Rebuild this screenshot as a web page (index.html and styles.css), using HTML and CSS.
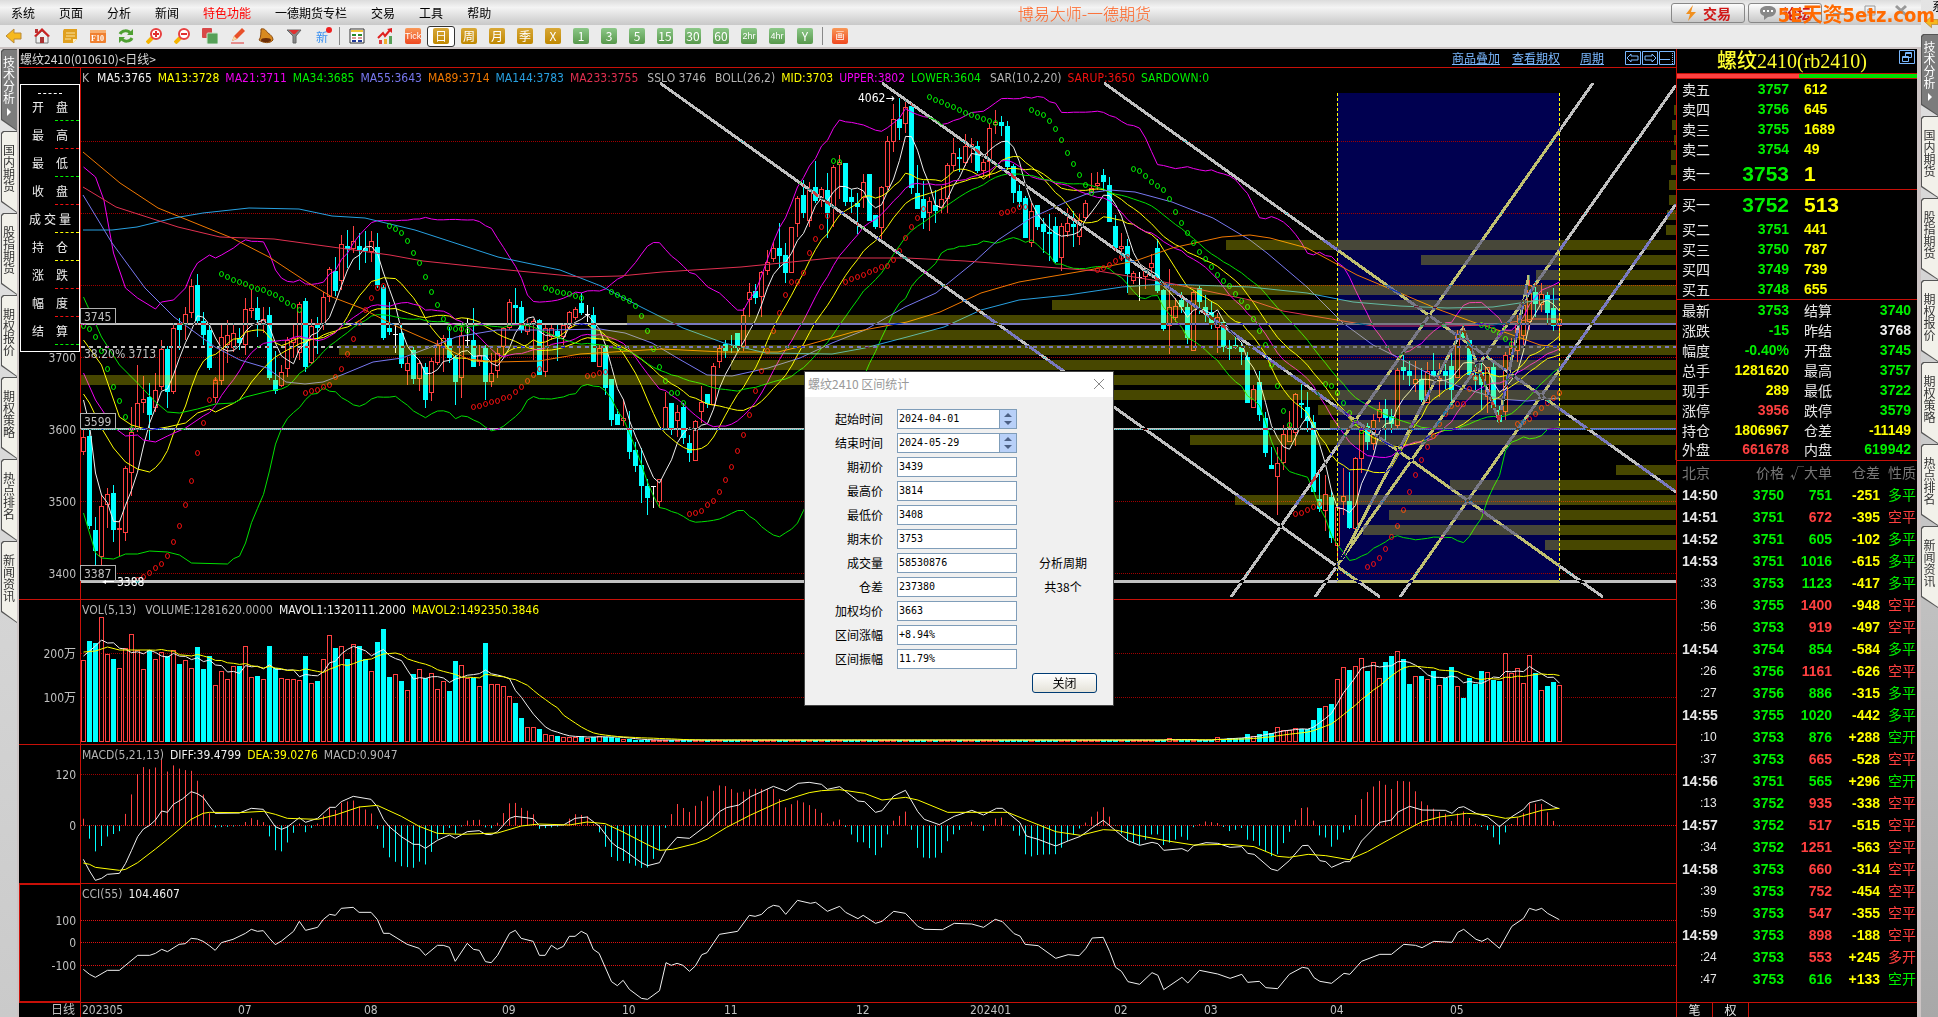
FILE: index.html
```html
<!DOCTYPE html>
<html lang="zh-CN">
<head>
    <meta charset="UTF-8">
    <meta name="viewport" content="width=device-width, initial-scale=1.0">
    <title>博易大师-一德期货</title>
    <link rel="stylesheet" href="styles.css">
</head>
<body>

<div class="app">
    <header>
        <nav class="menu">
            <a href="#">系统</a>
            <a href="#">页面</a>
            <a href="#">分析</a>
            <a href="#">新闻</a>
            <a href="#" class="hot">特色功能</a>
            <a href="#">一德期货专栏</a>
            <a href="#">交易</a>
            <a href="#">工具</a>
            <a href="#">帮助</a>
            <h1>博易大师-一德期货</h1>
            <div class="menu-right">
                <button class="big"><svg width="12" height="16" viewBox="0 0 12 16"><path d="M8 0L1 9h4L3 16l8-9H6z" fill="#f09020"/></svg>交易</button>
                <button class="big"><svg width="18" height="16" viewBox="0 0 18 16"><path d="M9 1c5 0 8 2 8 5s-3 6-8 6l-4 3v-4C2 10 1 8 1 6c0-3 3-5 8-5z" fill="#888"/><path d="M4 6h2M8 6h2M12 6h2" stroke="#fff" stroke-width="2"/></svg>论坛</button>
                <button class="win" aria-label="最小化"><svg width="14" height="14" viewBox="0 0 14 14"><path d="M1 10h12" stroke="#999" stroke-width="2"/></svg></button>
                <button class="win" aria-label="还原"><svg width="14" height="14" viewBox="0 0 14 14"><path d="M2 2h10v9H2zM5 5h4v3H5z" fill="none" stroke="#999"/></svg></button>
                <button class="win" aria-label="关闭"><svg width="14" height="14" viewBox="0 0 14 14"><path d="M2 2l10 9M12 2L2 11" stroke="#999" stroke-width="3"/></svg></button>
            </div>
        </nav>
        <div class="toolbar">
            <button aria-label="后退"><svg viewBox="0 0 16 16"><path d="M0 8l8-7v4h7v6H8v4z" fill="#f6b91e" stroke="#b98a3a"/></svg></button>
            <button aria-label="首页"><svg viewBox="0 0 16 16"><path d="M2 8v7h12V8L8 3z" fill="#eee" stroke="#777"/><path d="M0 8l8-8 8 8-2 1-6-6-6 6z" fill="#c22"/><path d="M1 1h3v4H1z" fill="#b33"/><path d="M6 9h4v6H6z" fill="#a33"/></svg></button>
            <button aria-label="便笺"><svg viewBox="0 0 16 16"><path d="M2 1h13v10l-4 4H1V3z" fill="#e0a020"/><path d="M4 5h9M4 8h9M3 11h6" stroke="#fbe3a0"/><path d="M15 11h-4v4z" fill="#fff0c0"/></svg></button>
            <button aria-label="F10"><svg viewBox="0 0 16 16"><rect y="2" width="16" height="13" rx="1" fill="#f08030"/><path d="M0 2h16v3H0z" fill="#f8b070"/><text x="1" y="13" class="f10">F10</text></svg></button>
            <button aria-label="刷新"><svg viewBox="0 0 16 16"><path d="M2 6c2-4 8-4 10-1M14 10c-2 4-8 4-10 1" fill="none" stroke="#4fa032" stroke-width="3"/><path d="M15 1v6H9zM1 15V9h6z" fill="#4fa032"/></svg></button>
            <button aria-label="放大"><svg viewBox="0 0 16 16"><path d="M1 15l6-6" stroke="#f5b400" stroke-width="4"/><circle cx="10" cy="6" r="5" fill="#fff" stroke="#e84040" stroke-width="2"/><path d="M7 6h6M10 3v6" stroke="#e03030" stroke-width="2"/></svg></button>
            <button aria-label="缩小"><svg viewBox="0 0 16 16"><path d="M1 15l6-6" stroke="#f5b400" stroke-width="4"/><circle cx="10" cy="6" r="5" fill="#fff" stroke="#e84040" stroke-width="2"/><path d="M7 6h6" stroke="#e03030" stroke-width="2"/></svg></button>
            <button aria-label="叠加"><svg viewBox="0 0 16 16"><rect width="10" height="10" rx="1" fill="#d84848"/><rect x="5" y="5" width="11" height="11" rx="1" fill="#56a058" stroke="#cfe5cf"/></svg></button>
            <button aria-label="画线"><svg viewBox="0 0 16 16"><path d="M2 13l2-5 8-8 3 3-8 8z" fill="#e8502a"/><path d="M2 13l2-5 3 3z" fill="#f6d9a0"/><path d="M1 15h13" stroke="#e03030"/></svg></button>
            <button aria-label="预警"><svg viewBox="0 0 16 16"><path d="M3 1c4-1 5 2 7 4 3 2 5 4 5 7-3 4-10 3-14 0 2-2 2-8 2-11z" fill="#d98a20" stroke="#8a4a10"/><ellipse cx="8" cy="12" rx="5" ry="2" fill="#6b2d08"/></svg></button>
            <button aria-label="筛选"><svg viewBox="0 0 16 16"><path d="M1 2h14l-5 6v7H7V8z" fill="#888" stroke="#666"/><path d="M3 2h10L9 6H7z" fill="#e03030"/></svg></button>
            <button class="new" aria-label="新">新<i></i></button>
            <span class="sep"></span>
            <button aria-label="报价"><svg viewBox="0 0 16 16"><path d="M1 1h14v14H1z" fill="#fff" stroke="#333"/><path d="M2 2h12v2H2z" fill="#f2c53c"/><path d="M3 7h4M9 7h4" stroke="#2a8a2a" stroke-width="2"/><path d="M3 10h4M9 10h4" stroke="#c03030"/><path d="M3 13h4M9 13h4" stroke="#223a9a" stroke-width="2"/></svg></button>
            <button aria-label="走势"><svg viewBox="0 0 16 16"><path d="M2 16v-4h3v4z" fill="#e04040"/><path d="M7 16v-5h3v5z" fill="#f0b030"/><path d="M12 16V8h3v8z" fill="#58a058"/><path d="M1 10l5-5 2 3 5-6" fill="none" stroke="#e02020" stroke-width="2"/><path d="M15 0v5l-5-4z" fill="#e02020"/></svg></button>
            <button><b class="tile tick">Tick</b></button>
            <button class="on"><b class="tile gold">日</b></button>
            <button><b class="tile gold">周</b></button>
            <button><b class="tile gold">月</b></button>
            <button><b class="tile gold">季</b></button>
            <button><b class="tile gold">X</b></button>
            <button><b class="tile green">1</b></button>
            <button><b class="tile green">3</b></button>
            <button><b class="tile green">5</b></button>
            <button><b class="tile green">15</b></button>
            <button><b class="tile green">30</b></button>
            <button><b class="tile green">60</b></button>
            <button><b class="tile green narrow">2hr</b></button>
            <button><b class="tile green narrow">4hr</b></button>
            <button><b class="tile green">Y</b></button>
            <span class="sep"></span>
            <button><b class="tile tick">画</b></button>
        </div>
        <div class="watermark">5E天资5etz.com</div>
    </header>

    <main>
        <aside class="tabs">
            <a href="#" class="tab active"><span>技术分析</span><i></i></a>
            <a href="#" class="tab"><span>国内期货</span></a>
            <a href="#" class="tab"><span>股指期货</span></a>
            <a href="#" class="tab"><span>期权报价</span></a>
            <a href="#" class="tab"><span>期权策略</span></a>
            <a href="#" class="tab"><span>热点排名</span></a>
            <a href="#" class="tab"><span>新闻资讯</span></a>
        </aside>

        <section class="chart">
            <div class="chart-title">
                <span>螺纹2410(010610)&lt;日线&gt;</span>
                <div class="links">
                    <a href="#">商品叠加</a>
                    <a href="#">查看期权</a>
                    <a href="#" class="last">周期</a>
                    <svg width="50" height="15" viewBox="0 0 50 15" fill="none" stroke="#7ab8ff"><path d="M.5 .5h15v13H.5zM17.5 .5h15v13h-15zM34.5 .5h15v13h-15z"/><path d="M2 7l4-4v2h7v4H6v2zM31 7l-4-4v2h-7v4h7v2zM35 8.5h10"/><path d="M47.5 2v11" stroke-dasharray="1 1"/></svg>
                </div>
            </div>
            <div class="pane">
                <svg id="price" viewBox="19 68 1657 531" preserveAspectRatio="none"></svg>
                <p class="legend first">
                    <span class="g k">K</span><span class="w">MA5:3765</span><span class="y">MA13:3728</span><span class="m">MA21:3711</span><span class="gr">MA34:3685</span><span class="pu">MA55:3643</span><span class="or">MA89:3714</span><span class="bl">MA144:3783</span><span class="cr">MA233:3755</span><span class="g">SSLO 3746</span><span class="g">BOLL(26,2)</span><span class="y">MID:3703</span><span class="m">UPPER:3802</span><span class="gr">LOWER:3604</span><span class="g">SAR(10,2,20)</span><span class="re">SARUP:3650</span><span class="gr">SARDOWN:0</span>
                </p>
                <div class="cursor-box">
                    <div class="dash w"></div>
                    <div class="item gr"><b>开</b><b>盘</b></div>
                    <div class="item re"><b>最</b><b>高</b></div>
                    <div class="item gr"><b>最</b><b>低</b></div>
                    <div class="item re"><b>收</b><b>盘</b></div>
                    <div class="item y wide"><b>成</b><b>交</b><b>量</b></div>
                    <div class="item y"><b>持</b><b>仓</b></div>
                    <div class="item re"><b>涨</b><b>跌</b></div>
                    <div class="item re"><b>幅</b><b>度</b></div>
                    <div class="item gr"><b>结</b><b>算</b></div>
                </div>
            </div>
            <div class="pane">
                <svg id="vol" viewBox="19 600 1657 144" preserveAspectRatio="none"></svg>
                <p class="legend"><span class="g">VOL(5,13)</span><span class="g">VOLUME:1281620.0000</span><span class="w">MAVOL1:1320111.2000</span><span class="y">MAVOL2:1492350.3846</span></p>
            </div>
            <div class="pane">
                <svg id="macd" viewBox="19 745 1657 138" preserveAspectRatio="none"></svg>
                <p class="legend"><span class="g">MACD(5,21,13)</span><span class="w">DIFF:39.4799</span><span class="y">DEA:39.0276</span><span class="g">MACD:0.9047</span></p>
            </div>
            <div class="pane cci">
                <svg id="cci" viewBox="19 884 1657 118" preserveAspectRatio="none"></svg>
                <p class="legend"><span class="g">CCI(55)</span><span class="w">104.4607</span></p>
            </div>
            <div class="dates"><svg id="dates" viewBox="19 1003 1657 14" preserveAspectRatio="none"></svg></div>
        </section>

        <section class="quote">
            <h2>螺纹2410(rb2410)<svg width="16" height="14" viewBox="0 0 16 14" fill="none" stroke="#7ab8ff"><path d="M.5 .5h15v13H.5zM6.5 2.5h6v5h-6zM6.5 3.5h6M3.5 6.5h6v5h-6zM3.5 7.5h6"/></svg></h2>
            <div class="ratio"><i></i></div>
            <table class="book">
                <tr><th>卖五</th><td class="gr">3757</td><td>612</td></tr>
                <tr><th>卖四</th><td class="gr">3756</td><td>645</td></tr>
                <tr><th>卖三</th><td class="gr">3755</td><td>1689</td></tr>
                <tr><th>卖二</th><td class="gr">3754</td><td>49</td></tr>
                <tr class="top"><th>卖一</th><td class="gr">3753</td><td>1</td></tr>
            </table>
            <table class="book">
                <tr class="top"><th>买一</th><td class="gr">3752</td><td>513</td></tr>
                <tr><th>买二</th><td class="gr">3751</td><td>441</td></tr>
                <tr><th>买三</th><td class="gr">3750</td><td>787</td></tr>
                <tr><th>买四</th><td class="gr">3749</td><td>739</td></tr>
                <tr><th>买五</th><td class="gr">3748</td><td>655</td></tr>
            </table>
            <table class="stats">
                <tr><th>最新</th><td class="gr">3753</td><th>结算</th><td class="gr">3740</td></tr>
                <tr><th>涨跌</th><td class="gr">-15</td><th>昨结</th><td class="w">3768</td></tr>
                <tr><th>幅度</th><td class="gr">-0.40%</td><th>开盘</th><td class="gr">3745</td></tr>
                <tr><th>总手</th><td class="y">1281620</td><th>最高</th><td class="gr">3757</td></tr>
                <tr><th>现手</th><td class="y">289</td><th>最低</th><td class="gr">3722</td></tr>
                <tr><th>涨停</th><td class="rd">3956</td><th>跌停</th><td class="gr">3579</td></tr>
                <tr><th>持仓</th><td class="y">1806967</td><th>仓差</th><td class="y">-11149</td></tr>
                <tr><th>外盘</th><td class="rd">661678</td><th>内盘</th><td class="gr">619942</td></tr>
            </table>
            <table class="ticks">
                <thead><tr><th>北京</th><th>价格</th><th>√大单</th><th>仓差</th><th>性质</th></tr></thead>
                <tbody id="ticks"></tbody>
            </table>
            <div class="quote-tabs"><a href="#">笔</a><a href="#">权</a></div>
        </section>
    </main>
</div>

<aside class="side">
    <div class="side-top"><span>系</span><svg width="13" height="14" viewBox="0 0 16 16"><path d="M0 8l8-7v4h8v6H8v4z" fill="#f6b91e" stroke="#b98a3a"/></svg></div>
    <a href="#" class="tab active"><span>技术分析</span><i></i></a>
    <a href="#" class="tab"><span>国内期货</span></a>
    <a href="#" class="tab"><span>股指期货</span></a>
    <a href="#" class="tab"><span>期权报价</span></a>
    <a href="#" class="tab"><span>期权策略</span></a>
    <a href="#" class="tab"><span>热点排名</span></a>
    <a href="#" class="tab"><span>新闻资讯</span></a>
</aside>

<form class="dialog">
    <div class="dialog-title"><span>螺纹2410 区间统计</span><button type="button" aria-label="关闭"><svg width="12" height="12" viewBox="0 0 12 12"><path d="M1 1l10 10M11 1L1 11" stroke="#888"/></svg></button></div>
    <div class="fields">
        <label for="f1">起始时间</label><div class="spin"><input id="f1" value="2024-04-01"><svg viewBox="0 0 16 18"><path d="M4 7l4-4 4 4zM4 11l4 4 4-4z" fill="#4d6185"/></svg></div><span></span>
        <label for="f2">结束时间</label><div class="spin"><input id="f2" value="2024-05-29"><svg viewBox="0 0 16 18"><path d="M4 7l4-4 4 4zM4 11l4 4 4-4z" fill="#4d6185"/></svg></div><span></span>
        <label for="f3">期初价</label><input id="f3" value="3439"><span></span>
        <label for="f4">最高价</label><input id="f4" value="3814"><span></span>
        <label for="f5">最低价</label><input id="f5" value="3408"><span></span>
        <label for="f6">期末价</label><input id="f6" value="3753"><span></span>
        <label for="f7">成交量</label><input id="f7" value="58530876"><span>分析周期</span>
        <label for="f8">仓差</label><input id="f8" value="237380"><span>共38个</span>
        <label for="f9">加权均价</label><input id="f9" value="3663"><span></span>
        <label for="f10">区间涨幅</label><input id="f10" value="+8.94%"><span></span>
        <label for="f11">区间振幅</label><input id="f11" value="11.79%"><span></span>
    </div>
    <button type="button" class="close">关闭</button>
</form>

<script src="chart.js"></script>
</body>
</html>
```
FILE: styles.css
```css
* {
    box-sizing: border-box;
}
body {
    margin: 0;
    height: 100vh;
    display: flex;
    overflow: hidden;
    background: #d0d0d0;
    color: #000;
    font: 12px "Noto Sans CJK SC", sans-serif;
}
a {
    color: inherit;
    text-decoration: none;
}
button {
    font: inherit;
    padding: 0;
    border: 0;
    background: none;
    color: inherit;
}
.app {
    flex: 1;
    min-width: 0;
    display: flex;
    flex-direction: column;
}

/* colours shared by the legends and the quote panel */
.g { color: #b4b4b4; }
.w { color: #f0f0f0; }
.y { color: #ffff00; }
.m { color: #f000f0; }
.gr { color: #00f000; }
.pu { color: #7878f0; }
.or { color: #f07800; }
.bl { color: #28a0e0; }
.cr { color: #e03050; }
.re { color: #f01010; }
.rd { color: #ff4040; }

/* menu and toolbar */
header {
    position: relative;
}
.menu {
    display: flex;
    align-items: center;
    gap: 24px;
    height: 25px;
    padding-left: 11px;
    background: linear-gradient(#dcdcdc, #f4f4f4 30%, #c8c8c8);
}
.menu .hot {
    color: #ff0000;
}
.menu h1 {
    margin: 0 0 0 auto;
    font-size: 16px;
    font-weight: 300;
    color: #ff6020;
    white-space: nowrap;
}
.menu-right {
    flex: 0 0 250px;
    margin-left: 496px;
    display: flex;
    gap: 3px;
}
.menu-right .big {
    display: flex;
    align-items: center;
    justify-content: center;
    gap: 6px;
    width: 74px;
    height: 20px;
    border: 1px solid #888;
    border-radius: 3px;
    background: linear-gradient(#fdfdfd, #c8c8c8);
    color: #d01818;
    font-size: 14px;
    font-weight: 700;
    line-height: 18px;
}
.menu-right .win {
    width: 28px;
}
.watermark {
    position: absolute;
    right: -14px;
    top: 1px;
    z-index: 2;
    font-family: "DejaVu Sans Condensed", "Noto Sans CJK SC", sans-serif;
    font-size: 20px;
    font-weight: 700;
    line-height: 28px;
    white-space: nowrap;
    color: #ff6a00;
}
.toolbar {
    display: flex;
    align-items: center;
    height: 24px;
    background: #ebebeb;
    border-bottom: 2px solid #ccc4c4;
}
.toolbar button {
    flex: 0 0 28px;
    height: 21px;
    display: flex;
    align-items: center;
    justify-content: center;
}
.toolbar button svg {
    width: 16px;
    height: 16px;
}
.toolbar .on {
    background: #fff;
    border: 1px solid #333;
    border-radius: 3px;
}
.toolbar .new {
    position: relative;
    color: #3a90f0;
}
.new i {
    position: absolute;
    right: 4px;
    top: 1px;
    width: 6px;
    height: 6px;
    border-radius: 50%;
    background: #f02020;
}
.sep {
    width: 1px;
    height: 18px;
    margin: 0 3px;
    background: #888;
}
.tile {
    width: 16px;
    height: 16px;
    border-radius: 2px;
    color: #fff;
    font-size: 12px;
    font-weight: 400;
    line-height: 16px;
    text-align: center;
}
.tile.narrow {
    font: 9px/16px "Liberation Sans", sans-serif;
}
.gold { background: linear-gradient(#d8a838, #c08800); }
.green { background: linear-gradient(#8cc888, #58984c); }
.tick {
    background: linear-gradient(#f89858, #f04820);
    font: 9px/16px "Liberation Sans", "Noto Sans CJK SC", sans-serif;
}

main {
    flex: 1;
    min-height: 0;
    display: flex;
}

/* slanted vertical tabs */
.tabs {
    flex: 0 0 19px;
    padding-left: 1px;
    background: linear-gradient(#e4e4e4, #cacaca);
    border-right: 2px solid #ccc4c4;
}
.side {
    flex: 0 0 17px;
    min-width: 0;
    overflow: hidden;
    background: linear-gradient(#e4e4e4, #a8a8a8);
}
.side-top {
    height: 34px;
    padding-left: 4px;
}
.side-top span {
    display: block;
    height: 15px;
    line-height: 12px;
    padding-left: 7px;
    white-space: nowrap;
}
.side-top svg {
    display: block;
}
.tab {
    position: relative;
    display: flex;
    flex-direction: column;
    align-items: center;
    justify-content: center;
    height: 82px;
    padding-bottom: 8px;
    background: #555;
    clip-path: polygon(0 2px, 2px 0, 100% 0, 100% 100%, 0 calc(100% - 11px));
    color: #333;
}
.tab::before {
    content: "";
    position: absolute;
    inset: 1px 0 1px 1px;
    background: #f2f1ea;
    clip-path: polygon(0 2px, 2px 0, 100% 0, 100% 100%, 0 calc(100% - 11px));
}
.tab span {
    position: relative;
    width: 12px;
    line-height: 12px;
    word-break: break-all;
}
.tab.active {
    color: #fff;
}
.tab.active::before {
    background: #7c7c7c;
}
.tab i {
    position: relative;
    margin-top: 4px;
    border-left: 4px solid #fff;
    border-top: 4px solid transparent;
    border-bottom: 4px solid transparent;
}

/* chart panes */
.chart {
    flex: 1;
    min-width: 0;
    display: grid;
    grid-template-rows: 19px 532fr 145fr 139fr 119fr 14fr;
    background: #000;
    border-right: 1px solid #c81008;
}
.chart-title {
    display: flex;
    justify-content: space-between;
    align-items: center;
    padding: 0 1px;
    border-bottom: 1px solid #c81008;
    color: #d8d8d8;
}
.links {
    display: flex;
    align-items: center;
    gap: 12px;
    line-height: 14px;
    color: #7ab8ff;
}
.links a {
    text-decoration: underline;
}
.links .last {
    margin: 0 9px 0 8px;
}
.pane {
    position: relative;
    min-height: 0;
    border-bottom: 1px solid #c81008;
}
.pane svg,
.dates svg {
    position: absolute;
    inset: 0;
    width: 100%;
    height: 100%;
}
.dates {
    position: relative;
    min-height: 0;
}
.legend {
    position: relative;
    display: flex;
    gap: 6px;
    margin: 0;
    padding: 3px 0 0 63px;
    font: 12px/14px "DejaVu Sans Condensed", sans-serif;
    white-space: nowrap;
}
.legend .k {
    margin-right: 2px;
}
.legend .g + .g,
.legend.first .g:not(.k) {
    margin-left: 3px;
}
.cursor-box {
    position: absolute;
    left: 1px;
    top: 16px;
    width: 60px;
    height: 268px;
    border: 1px solid #fff;
    background: #000;
    color: #f0f0f0;
}
.dash {
    width: 24px;
    margin: 8px auto 0;
    border-top: 1px dashed #fff;
}
.item {
    position: relative;
    display: flex;
    justify-content: center;
    gap: 12px;
    height: 28px;
    line-height: 26px;
}
.item b {
    font-weight: 400;
    color: #f0f0f0;
}
.item.wide {
    gap: 3px;
}
.item::after {
    content: "";
    position: absolute;
    right: 0;
    bottom: 1px;
    width: 24px;
    border-top: 1px dashed;
}

/* chart drawing */
svg text {
    font-family: "DejaVu Sans Condensed", "Noto Sans CJK SC", sans-serif;
    font-size: 12px;
    fill: #c0c0c0;
}
svg text.f10 {
    font: 700 8px "Liberation Serif", serif;
    fill: #fff;
}
svg .right { text-anchor: end; }
svg .bright { fill: #fff; stroke: none; }
svg .grid { stroke: #a00000; stroke-dasharray: 1 1; }
svg .grid.hi { stroke: #e01010; }
svg .frame { stroke: #c81008; }
svg .up { stroke: #ff4040; fill: none; }
svg .up.body { fill: #000; }
svg .down { stroke: #00ffff; fill: #00ffff; }
svg .flat { stroke: #ffffff; }
svg .line { fill: none; stroke-width: 1; }
svg .drawn { stroke: #c0c0c0; fill: none; mix-blend-mode: difference; }
svg .profile { fill: #ffff00; fill-opacity: .28; }
svg .range { fill: #000050; }
svg .edge { stroke: #ffff00; stroke-dasharray: 3 2; }

/* quote panel */
.quote {
    flex: 0 0 244px;
    display: flex;
    flex-direction: column;
    background: #000;
    border-right: 4px solid #ccc4c4;
    color: #e8e8e8;
    font-size: 14px;
}
.quote h2 {
    display: flex;
    justify-content: flex-end;
    gap: 32px;
    margin: 0;
    padding: 1px 2px 0 0;
    height: 24px;
    font: 500 20px/23px "Liberation Serif", "Noto Sans CJK SC", serif;
    color: #ffff30;
}
.ratio {
    height: 6px;
    border: solid #c81008;
    border-width: 1px 0;
    background: #00e000;
}
.ratio i {
    display: block;
    width: 51%;
    height: 4px;
    background: #ff4040;
}
.quote table {
    width: 100%;
    table-layout: fixed;
    border-collapse: collapse;
}
.quote th,
.quote td {
    height: 20px;
    padding: 0;
    line-height: 19px;
}
.quote th {
    font-weight: 400;
    text-align: left;
    white-space: nowrap;
}
.quote td {
    font-family: "Liberation Sans", "Noto Sans CJK SC", sans-serif;
    font-weight: 700;
    text-align: right;
}
.book,
.stats {
    border-bottom: 1px solid #c81008;
}
.quote .book th,
.quote .stats th:first-child {
    width: 50px;
    padding-left: 5px;
}
.book td:nth-child(2),
.stats td:nth-child(2) {
    width: 62px;
}
.quote .book td:last-child {
    padding-left: 15px;
    text-align: left;
    color: #ffff00;
}
.quote .book .top th,
.quote .book .top td {
    height: 30px;
}
.book .top td {
    font-size: 21px;
}
.quote .stats th:nth-child(3) {
    width: 60px;
    padding-left: 15px;
}
.quote .stats td:last-child {
    padding-right: 6px;
}
.quote .ticks th {
    height: 24px;
}
.quote .ticks td {
    height: 22px;
}
.ticks th {
    color: #787878;
}
.quote .ticks th + th {
    text-align: right;
}
.quote .ticks tr > :first-child {
    width: 50px;
    padding-left: 5px;
    text-align: left;
}
.quote .ticks tr > :nth-child(2) { width: 57px; }
.quote .ticks tr > :nth-child(3) { width: 48px; }
.quote .ticks tr > :nth-child(4) { width: 48px; }
.quote .ticks tr > :nth-child(5) {
    padding-right: 1px;
    font-weight: 400;
}
.quote .ticks td.sec {
    padding-left: 23px;
    font-size: 12px;
    font-weight: 400;
}
.quote-tabs {
    margin-top: auto;
    display: flex;
    height: 15px;
    border-top: 1px solid #c81008;
    font-size: 12px;
    line-height: 14px;
}
.quote-tabs a {
    width: 36px;
    border-right: 1px solid #c81008;
    text-align: center;
}

/* range statistics dialog */
.dialog {
    position: absolute;
    left: 805px;
    top: 372px;
    width: 308px;
    padding-bottom: 12px;
    background: #f0f0f0;
    outline: 1px solid #444;
}
.dialog-title {
    display: flex;
    justify-content: space-between;
    align-items: center;
    height: 25px;
    padding: 0 8px 2px 3px;
    background: #fff;
    color: #999;
}
.dialog-title button {
    height: 12px;
    line-height: 0;
}
.fields {
    display: grid;
    grid-template-columns: 78px 120px 64px;
    grid-auto-rows: 20px;
    gap: 4px 14px;
    align-items: center;
    padding-top: 12px;
    line-height: 16px;
}
.fields label {
    text-align: right;
}
.fields span {
    text-align: center;
    white-space: nowrap;
}
.fields input {
    width: 100%;
    height: 20px;
    padding: 0 1px 2px;
    border: 1px solid #7f9db9;
    background: #fff;
    font: 10px "DejaVu Sans Mono", monospace;
}
.spin {
    display: flex;
    height: 20px;
    border: 1px solid #7f9db9;
    background: #b8d0f8;
}
.fields .spin input {
    flex: 1;
    min-width: 0;
    height: 18px;
    border: 0;
    border-right: 1px solid #7f9db9;
}
.spin svg {
    flex: 0 0 16px;
}
.close {
    display: block;
    width: 65px;
    height: 20px;
    margin: 4px 16px 0 auto;
    border: 1px solid #003c74;
    border-radius: 3px;
    background: linear-gradient(#fff, #e4e2d8);
    line-height: 18px;
}
```
FILE: chart.js
```js
const NS = 'http://www.w3.org/2000/svg';

function add(svg, tag, cls, attrs, text) {
    const el = document.createElementNS(NS, tag);
    if (cls) el.setAttribute('class', cls);
    for (const k in attrs) el.setAttribute(k, attrs[k]);
    if (text) el.textContent = text;
    svg.appendChild(el);
    return el;
}

const hline = (svg, cls, y, x1 = 81, x2 = 1676) => add(svg, 'line', cls, { x1, x2, y1: y, y2: y });
const X = i => 83.5 + 6 * i;

// each bar: direction (r up, c down, w flat) then top, bottom, high, low
const bars = `r437,452,430,455 c436,526,430,529 c530,551,517,565 r506,557,495,565 r494,505,488,528 c493,530,485,542 r528,530,520,556 r468,533,466,541 r432,473,407,496 r403,430,365,432
r399,403,376,413 c397,415,383,440 r390,408,373,412 r349,387,340,390 c349,392,346,408 r328,392,323,394 c323,330,318,350 r314,325,307,340 r286,313,279,318 c285,321,274,325
c321,335,312,345 c330,368,325,370 r380,398,377,403 r337,381,325,385 r335,345,320,363 r333,348,323,352 c338,343,328,350 r309,345,298,355 r308,311,289,318 c308,320,297,337
r319,325,307,333 c315,378,307,380 c380,391,351,394 r372,386,365,387 r340,369,337,377 r338,343,325,358 r304,353,302,360 c301,367,298,372 r326,363,319,364 c323,328,317,354
r297,325,292,330 r269,297,267,302 c271,291,257,296 r244,281,235,290 c246,249,230,268 r241,249,226,253 c246,250,233,270 c248,251,231,263 r241,252,231,262 c247,285,233,288
c287,338,285,340 c328,332,302,335 w334,334,325,353 c333,364,323,368 r363,371,357,385 c350,379,347,384 r363,379,360,391 c367,400,363,408 r361,393,358,401 r345,363,340,365
r338,348,335,372 c338,358,327,363 c357,382,355,405 r335,378,323,398 w340,340,318,347 c340,367,308,367 r355,362,345,366 c348,382,345,400 r373,382,353,387 r353,371,347,378
r328,347,327,355 r302,328,299,330 c305,308,288,323 c307,330,301,333 r323,332,319,335 r321,325,319,360 c320,375,319,375 r328,372,325,377 r328,337,325,340 c331,337,325,361
r325,337,323,345 r312,328,311,330 r309,318,307,320 c303,313,293,315 w314,314,305,322 c315,362,307,362 r348,367,345,367 c345,388,345,395 c379,420,379,426 c414,425,409,425
r418,421,399,426 c429,452,411,459 c450,466,442,472 c465,486,448,503 c486,498,479,515 w486,486,486,508 r479,502,479,508 r407,429,392,429 c403,429,403,435 r412,421,405,437
c407,438,403,444 c443,453,435,462 r421,461,420,461 r402,412,386,423 c394,404,394,408 r366,405,363,405 r348,362,345,368 c344,351,340,358 c346,348,335,353 c333,348,333,352
r315,347,308,351 r292,300,283,317 c291,298,284,304 r272,297,271,317 r262,271,250,275 r248,259,242,262 c248,256,223,268 c255,273,243,283 r227,273,227,273 r198,224,196,237
c195,213,180,218 r189,221,182,227 c187,201,161,203 r189,200,187,207 c190,213,173,238 r167,207,165,227 r162,165,155,199 c163,202,163,206 c197,202,189,213 c203,207,193,234
r182,198,174,208 c174,221,174,221 c215,227,215,229 r187,228,186,240 r141,187,136,190 r119,142,104,152 c119,128,98,140 r107,124,100,133 c106,188,103,194 c193,209,165,209
c199,218,181,229 r201,213,197,231 c205,211,190,223 r199,208,186,213 r165,199,163,213 r153,166,138,171 c157,159,148,172 r146,163,134,166 r144,148,138,163 c146,171,141,173
r162,171,159,177 r128,162,123,178 r122,125,110,134 c122,126,116,136 c126,167,121,170 c166,193,164,203 c191,202,185,207 c198,238,196,238 r211,243,203,247 c205,227,205,230
c224,232,218,253 c232,234,214,261 c226,262,217,263 r226,258,223,271 r223,232,208,237 c224,227,211,247 r220,237,214,245 r203,218,200,221 r188,192,173,193 r183,186,172,190
c175,182,169,191 c185,222,177,222 c226,248,215,251 r246,249,233,261 c246,274,239,293 r273,281,271,284 w277,277,272,301 r270,277,268,289 r263,268,254,277 c248,291,239,293
c290,329,289,331 r307,326,269,354 r306,318,298,322 c300,307,292,313 c307,338,303,344 r292,351,290,351 c288,302,286,314 c307,313,295,322 c312,325,301,329 r317,328,313,353
c322,347,320,352 c346,349,340,360 c345,347,335,349 c347,352,342,365 c357,403,352,403 r389,408,385,408 c382,415,371,421 c418,453,412,457 c465,469,447,469 r463,477,447,515
r434,463,425,470 r427,442,411,442 r394,433,393,446 c403,405,383,418 c407,421,392,432 c422,492,415,492 c499,509,470,512 r494,511,475,531 c497,538,490,543 r507,546,507,560
r496,502,468,515 c501,528,472,529 r458,529,457,529 r430,459,427,473 c426,442,423,450 r420,444,414,450 r409,418,402,422 c409,418,399,440 c416,424,409,433 r370,426,368,428
c367,371,352,380 c371,376,361,386 r379,384,361,392 c379,400,368,402 r371,403,362,403 c371,376,353,376 r378,381,363,397 c371,376,363,389 c366,390,353,401 r333,378,330,378
c331,338,327,338 c340,375,340,375 c377,380,365,390 c372,385,362,410 r367,397,367,413 c367,408,363,408 c410,422,406,425 r355,412,352,420 r348,355,338,360 r325,351,315,362
r305,336,300,345 r285,322,275,330 c292,304,281,317 r294,305,283,312 c295,313,292,325 c308,326,288,331 r319,326,315,340`
    .trim().split(/\s+/).map(s => {
        const [top, bottom, high, low] = s.slice(1).split(',').map(Number);
        return { dir: s[0], top, bottom, high, low, close: s[0] === 'c' ? bottom : top };
    });

// volume bar heights, -n means a run of n quiet days
const volume = [];
[81,100,98,124,87,82,73,93,107,91,72,91,82,89,85,91,77,81,73,94,72,85,56,70,62,75,75,95,64,65,62,95,73,63,62,62,61,85,58,60,82,106,93,95,82,97,95,82,70,99,112,64,67,60,51,67,72,63,68,52,60,50,80,76,63,63,55,98,57,57,55,45,38,23,14,14,12,7,6,5,4,4,4,5,3,4,5,4,4,3,2,2,-89,3,-7,4,2,3,3,3,7,5,7,10,8,14,11,11,13,12,12,21,33,35,37,62,74,71,75,83,70,79,63,79,85,90,82,57,65,65,62,70,56,63,74,55,43,63,57,70,69,61,60,88,68,73,58,86,68,51,55,59,56]
    .forEach(v => { if (v > 0) volume.push(v); else for (let k = 0; k < -v; k++) volume.push(1); });

const closes = bars.map(b => b.close);
const mean = a => a.reduce((s, v) => s + v, 0) / a.length;

function ma(values, n) {
    return values.map((v, i) => i < n - 1 ? null : mean(values.slice(i - n + 1, i + 1)));
}

// head: points [bar, y] before the average has enough history
function curve(svg, color, values, head) {
    const pts = head.concat(values.map((v, i) => [i, v]).filter(p => p[1] !== null));
    add(svg, 'polyline', 'line', { stroke: color, points: pts.map(p => X(p[0]) + ',' + p[1].toFixed(1)).join(' ') });
}

function path(svg, color, points) {
    add(svg, 'polyline', 'line', { stroke: color, points });
}

/* ---------- price ---------- */
const price = document.getElementById('price');

add(price, 'rect', 'range', { x: 1337, y: 93, width: 223, height: 490 });
[141, 213, 285, 357, 429, 501, 573].forEach(y => hline(price, 'grid', y + .5));

function candle(svg, b, i) {
    const x = X(i);
    if (b.dir === 'w') {
        add(svg, 'line', 'flat', { x1: x, x2: x, y1: b.high, y2: b.low });
        add(svg, 'line', 'flat', { x1: x - 2.5, x2: x + 2.5, y1: b.top + .5, y2: b.top + .5 });
        return;
    }
    const cls = b.dir === 'r' ? 'up' : 'down';
    add(svg, 'line', cls, { x1: x, x2: x, y1: b.high, y2: b.low });
    add(svg, 'rect', cls + ' body', { x: x - 2, y: b.top + .5, width: 4, height: Math.max(b.bottom - b.top - 1, 1) });
}
const candles = add(price, 'g', '', { 'shape-rendering': 'crispEdges' });
bars.forEach((b, i) => candle(candles, b, i));

const mid = ma(closes, 26);
const band = k => mid.map((m, i) => {
    if (m === null) return null;
    const s = closes.slice(i - 25, i + 1);
    return m + k * Math.sqrt(mean(s.map(v => (v - m) ** 2)));
});
curve(price, '#ffff00', mid, [[0,340],[3,365],[6,417],[8,425],[11,430],[14,427],[17,423],[19,413],[21,409],[22,412]]);
curve(price, '#f000f0', band(-2), [[0,167],[2,177],[3.4,200],[5,253],[7,288],[9,298],[12,309],[13,302],[15,300],[17,288],[18,273],[19,263],[21,255],[22,258],[23,255]]);
curve(price, '#00e000', band(2), [[0,513],[2,553],[3,558],[5,559],[7,554],[9,554],[11,551],[14,552],[16,555],[18,563],[24,564]]);
curve(price, '#f0f0f0', ma(closes, 5), [[0,400],[1,425],[2,473],[3,495]]);
curve(price, '#ffff00', ma(closes, 13), [[0,394],[1,403],[3,428],[5,448],[7,462],[9,469],[11,472]]);
curve(price, '#f000f0', ma(closes, 21), [[0,373],[2,400],[5,427],[7,436],[9,435],[10,440],[12,442],[14,436],[17,428]]);
curve(price, '#00e000', ma(closes, 34), [[0,297],[3,337],[6,365],[9,383],[12,402],[14,412],[16,413],[19,409],[22,404],[25,403],[27,397],[31,391]]);
path(price, '#7878f0', '83,195 112,243 145,288 174,317 215,347 240,360 267,368 286,382 305,384 323,382 344,374 373,362 402,358 431,347 456,337 497,330 551,330 600,329 625,333 652,343 679,359 707,375 732,376 768,368 800,358 832,343 865,330 905,307 936,293 973,263 998,240 1031,218 1064,203 1089,193 1110,190 1135,192 1172,202 1213,218 1250,240 1267,253 1307,287 1343,323 1373,345 1397,357 1437,378 1463,388 1500,399 1527,401 1559,398');
path(price, '#f07800', '83,152 120,183 158,208 195,223 232,238 269,257 307,282 332,297 361,308 398,327 439,345 468,359 497,362 539,361 580,354 662,349 724,352 778,352 807,345 853,332 907,322 940,312 981,293 1019,282 1089,270 1135,261 1172,248 1222,237 1250,235 1270,238 1307,248 1357,275 1400,293 1440,310 1473,322 1507,333 1540,345 1559,347');
path(price, '#28a0e0', '83,230 112,230 137,227 174,218 203,213 249,208 299,209 332,216 365,218 415,230 498,257 560,270 601,286 641,307 683,328 724,343 766,353 832,354 865,348 907,337 944,327 981,310 1019,300 1068,295 1122,287 1164,284 1250,287 1307,293 1353,302 1400,306 1447,308 1493,307 1540,300 1559,299');
path(price, '#e03050', '83,187 116,207 178,227 220,237 274,239 332,247 390,255 423,261 498,269 580,277 620,276 662,272 741,267 832,258 907,258 965,261 1098,271 1164,282 1250,300 1283,311 1337,320 1373,326 1447,326 1493,325 1533,319 1559,319');

// SAR runs: first bar, colour, positions
[
    [0, 'g', [326,329,337,351,369,387,401,417,429]],
    [9, 'r', [580,577,573,568,564,556,542,526,505,481,453,423,400,381]],
    [23, 'g', [274,277,280,282,284,287,289,290,293,295,299,303,306,310]],
    [37, 'r', [393,391,390,387,385,377,369,354,339,323,310,298,288,286]],
    [51, 'g', [226,229,233,241,253,263,277,292,305,319,328,329,329,331]],
    [65, 'r', [407,406,404,402,401,398,397,392,387,381,375,369]],
    [77, 'g', [288,290,292,293,294,296,298]],
    [84, 'r', [376,375,373,372]],
    [88, 'g', [292,295,298,301,306,316,331,349,367,381,393,393,403]],
    [101, 'r', [514,513,511,505,501,492,480,467,451,435,415,391,371,351,331,313,295,282,282,273,253,239,227,216]],
    [125, 'g', [161,162]],
    [127, 'r', [282,279,277,275,272,270,267,266,260,251,238,227,218,209]],
    [141, 'g', [97,100,102,105,107,110,113,115,117,119,121,123]],
    [153, 'r', [213,212,210,207,207]],
    [158, 'g', [110,113,115,121,129,140,153,164,175,185,193]],
    [169, 'r', [270,268,265,261,257,257]],
    [175, 'g', [169,171,176,182,186,190,199,212,223,233,243,252,259,267,275,281,286,294,301,307,319,331,345,365,386,411,425]],
    [202, 'r', [514,513,510,507,504]],
    [207, 'g', [384,386,393,403,413,423,431]],
    [214, 'r', [567,564,558,549,537,526,510,492,475,460,447,436,424,414,406,404,404,389,378]],
    [233, 'g', [325,327,330,334,339,344]],
    [239, 'r', [424,422,419,414,408,403,398,393]]
].forEach(([start, c, ys]) => ys.forEach((y, k) =>
    add(price, 'ellipse', 'line', { cx: X(start + k), cy: y, rx: 2, ry: 2.5, stroke: c === 'g' ? '#00f000' : '#f01010' })));

// volume profile, one band every 15px, aligned right
[1674,1672,1674,1671,1671,1669,1669,1667,1666,1226,1421,1536,1128,1052,627,592,339,731,81,900,1318,1330,1190,1675,1616,1450,1235,1389,1363,1545]
    .forEach((x, k) => add(price, 'rect', 'profile', { x, y: 105 + 15 * k, width: 1676 - x, height: 10 }));

add(price, 'line', 'edge', { x1: 1337.5, x2: 1337.5, y1: 93, y2: 582 });
add(price, 'line', 'edge', { x1: 1559.5, x2: 1559.5, y1: 93, y2: 582 });

// hand drawn levels, channels and zigzag
hline(price, 'drawn', 324).setAttribute('stroke-width', 2);
hline(price, 'drawn', 429).setAttribute('stroke-width', 2);
hline(price, 'drawn', 581.5).setAttribute('stroke-width', 3);
const fib = hline(price, 'drawn', 347);
fib.setAttribute('stroke-width', 2);
fib.setAttribute('stroke-dasharray', '4 4');
['660,83 1380,597', '882,83 1603,597', '1104,83 1676,492', '1593,83 1231,597', '1676,85 1315,597', '1676,204 1400,597', '1341,560 1463,328 1499,420 1529,275']
    .forEach(points => add(price, 'polyline', 'drawn', { points, 'stroke-width': 3, 'shape-rendering': 'crispEdges' }));

add(price, 'line', 'frame', { x1: 80.5, x2: 80.5, y1: 68, y2: 600 });
[[3700, 362], [3600, 434], [3500, 506], [3400, 578]].forEach(([t, y]) => add(price, 'text', 'right', { x: 76, y }, t));
[[3745, 308], [3599, 413], [3387, 565]].forEach(([t, y]) => {
    add(price, 'rect', '', { x: 80.5, y: y + .5, width: 35, height: 15, fill: '#000', stroke: '#b0b0b0' });
    add(price, 'text', '', { x: 84, y: y + 13 }, t);
});
add(price, 'text', '', { x: 84, y: 358 }, '38.20% 3713');
add(price, 'path', 'bright', { d: 'M102 582l4-2v1h8v1h-8v2z' });
add(price, 'text', 'bright', { x: 117, y: 586 }, '3388');
add(price, 'text', 'bright', { x: 858, y: 102 }, '4062→');

/* ---------- volume ---------- */
const vol = document.getElementById('vol');
hline(vol, 'grid', 653.5);
hline(vol, 'grid', 697.5);
const volBars = add(vol, 'g', '', { 'shape-rendering': 'crispEdges' });
volume.forEach((h, i) => add(volBars, 'rect', bars[i].dir === 'c' ? 'down' : 'up', { x: X(i) - 2, y: 741 - h + .5, width: 4, height: h - .5 }));
const toY = a => a.map(v => v === null ? null : 741 - v);
curve(vol, '#f0f0f0', toY(ma(volume, 5)), [[0,656],[1,651],[2,646],[3,640]]);
curve(vol, '#ffff00', toY(ma(volume, 13)), [[0,652],[2,651],[4,647],[6,650],[9,650],[11,650]]);
add(vol, 'line', 'frame', { x1: 80.5, x2: 80.5, y1: 600, y2: 745 });
add(vol, 'text', 'right', { x: 76, y: 658 }, '200万');
add(vol, 'text', 'right', { x: 76, y: 702 }, '100万');

/* ---------- MACD and CCI ---------- */
// readings come in two stretches, each with its own x origin and x scale; y is in thirds
function readings(first, second) {
    const read = (s, x0, sx) => s.split(' ').map(p => {
        const [x, y] = p.split(',').map(Number);
        return [x0 + x / sx, 680 + y / 3];
    });
    return read(first, 0, 2.412).concat(read(second, 640, 1.537).filter(p => p[0] > 650));
}
function at(pts, x) {
    for (let k = 1; k < pts.length; k++) {
        const [a, b] = [pts[k - 1], pts[k]];
        if (x <= b[0]) return a[1] + (b[1] - a[1]) * (x - a[0]) / (b[0] - a[0]);
    }
    return pts[pts.length - 1][1];
}

const diff = readings(
    '201,538 216,573 230,601 245,595 259,583 288,580 303,550 317,512 332,470 346,447 361,436 375,420 390,393 404,397 418,373 440,357 461,335 476,341 490,352 505,378 519,400 577,399 606,385 635,388 650,415 664,440 679,448 693,441 722,413 737,427 766,415 795,382 809,382 823,365 852,349 895,358 910,380 925,418 939,440 968,470 997,493 1011,493 1026,505 1055,481 1084,465 1098,475 1127,455 1156,452 1171,463 1185,464 1200,455 1229,415 1243,409 1286,416 1301,437 1359,435 1387,415 1416,411 1445,438 1475,487 1489,501 1503,509 1547,548 1562,557',
    '12,556 30,548 40,510 57,472 76,475 103,435 122,395 133,383 152,375 170,350 205,319 224,333 243,310 260,307 279,313 288,328 307,320 335,363 345,365 362,397 372,392 390,348 408,331 427,395 437,418 460,434 483,409 510,391 528,405 548,385 557,385 584,428 594,468 612,478 639,498 659,482 677,469 695,443 712,421 733,455 750,482 768,496 787,487 796,491 805,511 833,506 842,514 851,497 870,488 888,490 907,502 925,500 934,520 944,523 970,567 980,572 998,542 1018,497 1027,496 1045,542 1054,545 1063,562 1083,545 1091,545 1109,483 1137,427 1155,420 1165,396 1183,379 1202,390 1238,391 1248,400 1258,383 1266,380 1285,400 1303,411 1321,440 1340,410 1358,388 1367,368 1386,359 1404,380 1413,386');
const dea = readings(
    '201,549 216,553 230,562 288,571 303,568 332,548 375,507 404,478 461,418 490,400 505,397 577,398 635,394 664,403 693,415 766,418 809,405 866,381 910,376 968,409 1011,439 1055,460 1113,463 1200,459 1257,438 1301,432 1373,435 1416,426 1460,431 1503,456 1562,494',
    '30,511 50,508 85,491 103,478 133,442 170,405 215,365 260,338 279,332 307,329 345,340 372,360 408,352 427,360 473,397 565,397 594,420 639,455 677,466 712,449 733,451 768,467 805,481 851,495 907,493 944,500 980,529 998,532 1027,523 1054,527 1090,539 1118,515 1174,454 1202,425 1229,411 1270,400 1303,404 1330,415 1350,411 1386,391 1413,385');
const cciPts = readings(
    '201,868 216,883 230,892 259,871 288,871 332,826 361,826 375,820 390,808 404,815 432,793 447,791 461,775 476,777 490,784 505,797 519,811 534,788 562,778 592,760 606,748 621,754 635,752 650,775 664,794 679,783 708,754 722,724 737,751 766,742 780,718 795,703 809,706 823,685 852,682 866,697 895,697 910,718 925,760 939,760 982,793 1011,805 1026,826 1055,796 1069,796 1084,802 1098,844 1127,790 1142,808 1156,811 1171,845 1185,848 1200,826 1229,760 1243,751 1257,775 1286,784 1301,826 1315,826 1330,796 1344,808 1359,799 1373,769 1387,769 1402,754 1416,763 1431,808 1445,820 1475,905 1489,917 1503,901 1518,928 1547,955 1562,958',
    '30,932 40,848 48,856 57,850 66,856 76,874 85,858 95,824 103,818 122,763 150,754 168,706 177,709 187,703 196,685 205,676 214,679 224,703 242,661 262,670 270,667 288,694 307,679 316,697 335,716 343,706 362,730 372,724 390,694 408,700 427,739 437,748 465,749 483,730 510,732 528,742 546,718 557,725 575,761 584,768 592,793 612,797 639,835 658,824 675,827 685,806 695,774 712,772 722,815 731,862 740,874 750,905 768,913 787,878 796,886 805,929 833,892 842,909 860,871 888,882 907,895 925,883 934,907 952,904 962,923 980,926 998,883 1018,862 1027,865 1036,893 1045,904 1063,910 1082,880 1091,883 1109,844 1137,823 1155,823 1174,793 1192,796 1202,803 1220,784 1248,787 1257,757 1266,748 1285,778 1294,784 1303,775 1321,805 1340,739 1358,715 1367,685 1377,691 1386,685 1395,700 1413,719');

const macd = document.getElementById('macd');
hline(macd, 'grid', 774.5);
hline(macd, 'grid hi', 825.5);
bars.forEach((b, i) => {
    const h = 2 * (at(dea, X(i)) - at(diff, X(i)));
    add(macd, 'line', h > 0 ? 'up' : 'down', { x1: X(i), x2: X(i), y1: 825.5, y2: (825.5 - h).toFixed(1) });
});
path(macd, '#f0f0f0', diff.join(' '));
path(macd, '#ffff00', dea.join(' '));
add(macd, 'line', 'frame', { x1: 80.5, x2: 80.5, y1: 745, y2: 884 });
add(macd, 'text', 'right', { x: 76, y: 779 }, '120');
add(macd, 'text', 'right', { x: 76, y: 830 }, '0');

const cci = document.getElementById('cci');
[[920.5, '100'], [942.5, '0'], [965.5, '-100']].forEach(([y, t]) => {
    hline(cci, 'grid hi', y);
    add(cci, 'text', 'right', { x: 76, y: y + 4 }, t);
});
path(cci, '#f0f0f0', cciPts.join(' '));
add(cci, 'rect', 'frame', { x: 19.5, y: 884.5, width: 61, height: 117, fill: 'none' });

const dates = document.getElementById('dates');
add(dates, 'line', 'frame', { x1: 80.5, x2: 80.5, y1: 1003, y2: 1017 });
[[51, '日线'], [82, '202305'], [238, '07'], [364, '08'], [502, '09'], [622, '10'], [724, '11'], [856, '12'], [970, '202401'], [1114, '02'], [1204, '03'], [1330, '04'], [1450, '05']]
    .forEach(([x, t]) => add(dates, 'text', '', { x, y: 1014 }, t));

/* ---------- ticks ---------- */
// time, price, volume, open interest change, type
const types = { a: '多平', b: '空平', c: '空开', d: '多开' };
document.getElementById('ticks').innerHTML = `14:50 3750 751 -251 a
14:51 3751 672 -395 b
14:52 3751 605 -102 a
14:53 3751 1016 -615 a
:33 3753 1123 -417 a
:36 3755 1400 -948 b
:56 3753 919 -497 b
14:54 3754 854 -584 a
:26 3756 1161 -626 b
:27 3756 886 -315 a
14:55 3755 1020 -442 a
:10 3753 876 +288 c
:37 3753 665 -528 b
14:56 3751 565 +296 c
:13 3752 935 -338 b
14:57 3752 517 -515 b
:34 3752 1251 -563 b
14:58 3753 660 -314 b
:39 3753 752 -454 b
:59 3753 547 -355 b
14:59 3753 898 -188 b
:24 3753 553 +245 d
:47 3753 616 +133 c`.split('\n').map(row => {
    const [time, p, v, oi, type] = row.split(' ');
    const color = type === 'a' || type === 'c' ? 'gr' : 'rd';
    return `<tr><td${time[0] === ':' ? ' class="sec"' : ''}>${time}</td><td class="gr">${p}</td><td class="${color}">${v}</td><td class="y">${oi}</td><td class="${color}">${types[type]}</td></tr>`;
}).join('');
```
